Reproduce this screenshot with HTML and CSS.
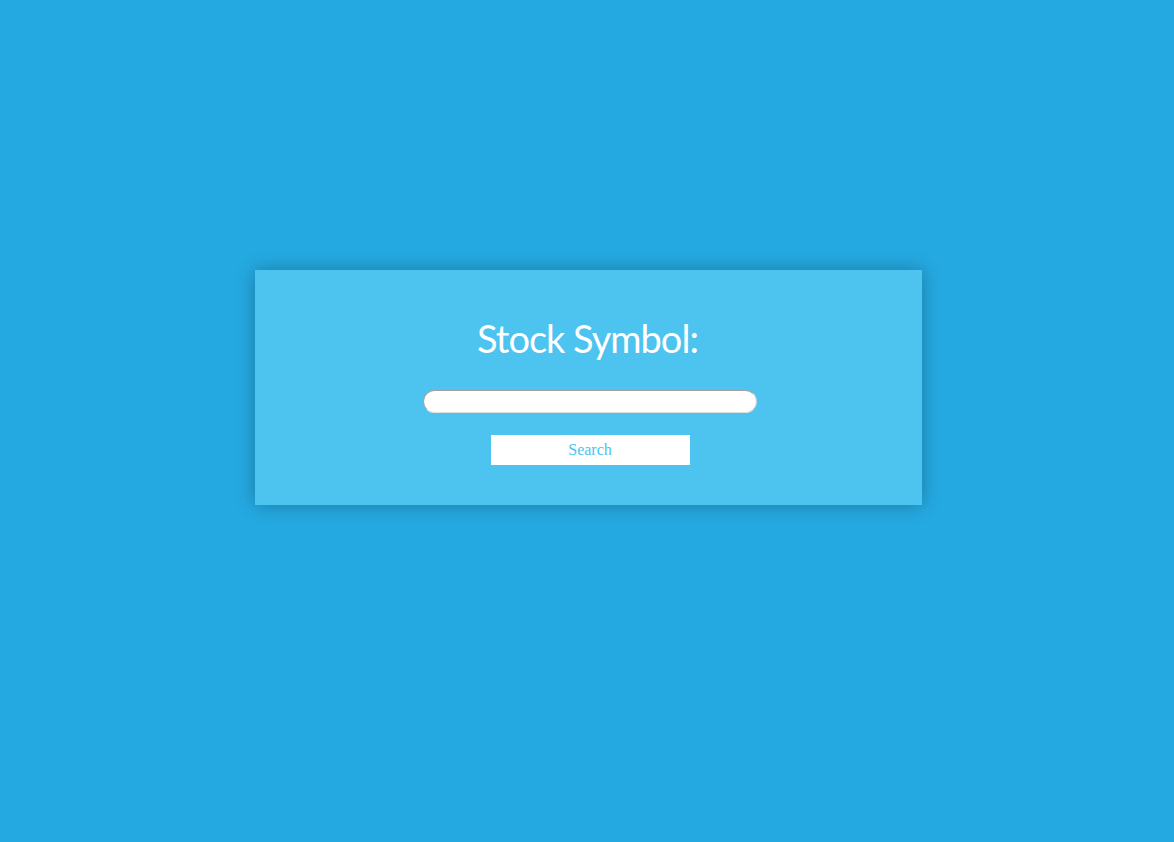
FILE: index.html
```html
<!DOCTYPE html>
<html>
<head>
<meta charset="utf-8">
<link rel="stylesheet" href="styles.css">
</head>
<body>
<div class="page">
  <div class="card">
    <h1 class="title">Stock Symbol:</h1>
    <input class="symbol" type="text">
    <button class="search">Search</button>
  </div>
</div>
</body>
</html>
```
FILE: styles.css
```css
html, body {
  margin: 0;
  padding: 0;
  background: #25a9e1;
  height: 100%;
}
.page {
  display: flex;
  justify-content: center;
  padding-top: 270px;
  padding-left: 3px;
}
.card {
  width: 667px;
  height: 235px;
  box-sizing: border-box;
  background: #4dc3ef;
  box-shadow: 0 0 18px rgba(0, 0, 0, 0.28);
  display: flex;
  flex-direction: column;
  align-items: center;
  padding-top: 44px;
  padding-left: 3px;
}
.title {
  margin: 0 5px 0 0;
  font-family: "Lato", "Open Sans", sans-serif;
  font-weight: 400;
  font-size: 38px;
  line-height: 48px;
  color: #ffffff;
  letter-spacing: -1px;
}
.symbol {
  margin-top: 28px;
  width: 334px;
  height: 23px;
  box-sizing: border-box;
  border-radius: 12px;
  border: 1px solid #a0a0a0;
  border-bottom-color: #e0e0e0;
  border-right-color: #d0d0d0;
  background: #ffffff;
  outline: none;
  padding: 0 10px;
}
.search {
  margin-top: 22px;
  width: 199px;
  height: 30px;
  border: none;
  background: #ffffff;
  color: #4dc3ef;
  font-family: "Liberation Serif", "Times New Roman", serif;
  font-size: 16px;
  padding: 0;
  cursor: pointer;
}
```
